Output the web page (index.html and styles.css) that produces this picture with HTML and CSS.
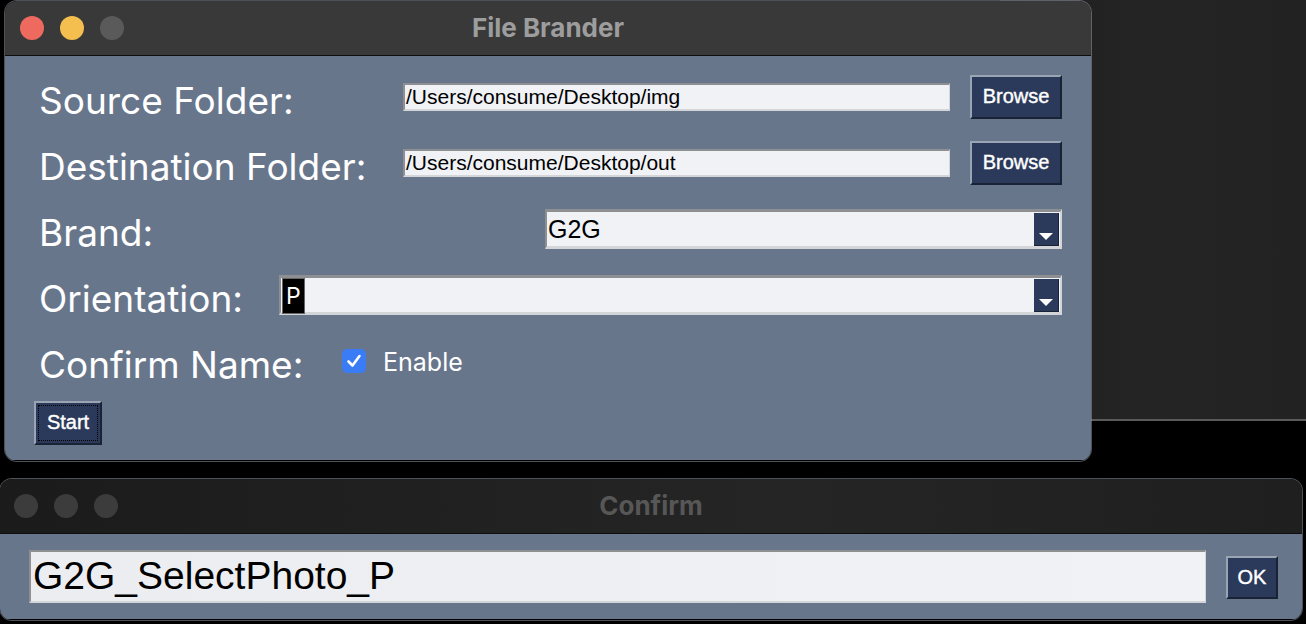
FILE: index.html
```html
<!DOCTYPE html>
<html>
<head>
<meta charset="utf-8">
<link rel="stylesheet" href="styles.css">
</head>
<body>
<div class="desktop">
  <div class="bg-window"></div>

  <div class="window main">
    <div class="titlebar active">
      <div class="lights">
        <span class="light red"></span>
        <span class="light yellow"></span>
        <span class="light gray"></span>
      </div>
      <div class="title">File Brander</div>
    </div>
    <div class="content">
      <div class="row">
        <div class="label">Source Folder:</div>
        <div class="entry path-entry">/Users/consume/Desktop/img</div>
        <div class="btn browse">Browse</div>
      </div>
      <div class="row">
        <div class="label">Destination Folder:</div>
        <div class="entry path-entry">/Users/consume/Desktop/out</div>
        <div class="btn browse">Browse</div>
      </div>
      <div class="row">
        <div class="label">Brand:</div>
        <div class="combo brand-combo">
          <div class="combo-text">G2G</div>
          <div class="combo-arrow"><span class="tri"></span></div>
        </div>
      </div>
      <div class="row">
        <div class="label">Orientation:</div>
        <div class="combo orient-combo">
          <div class="combo-text"><span class="sel">P</span></div>
          <div class="combo-arrow"><span class="tri"></span></div>
        </div>
      </div>
      <div class="row">
        <div class="label">Confirm Name:</div>
        <div class="check">
          <svg width="24" height="24" viewBox="0 0 24 24"><rect x="0" y="0" width="24" height="24" rx="5" fill="#3a7cf5"/><path d="M6.5 12.5 L10.5 16.5 L17.5 7" stroke="#fff" stroke-width="2.6" fill="none" stroke-linecap="round" stroke-linejoin="round"/></svg>
          <span class="check-label">Enable</span>
        </div>
      </div>
      <div class="btn start"><span class="focus">Start</span></div>
    </div>
  </div>

  <div class="window confirm">
    <div class="titlebar inactive">
      <div class="lights">
        <span class="light dim"></span>
        <span class="light dim"></span>
        <span class="light dim"></span>
      </div>
      <div class="title">Confirm</div>
    </div>
    <div class="confirm-content">
      <div class="entry big-entry">G2G_SelectPhoto_P</div>
      <div class="btn ok">OK</div>
    </div>
  </div>
</div>
</body>
</html>
```

FILE: styles.css
```css
* { box-sizing: border-box; }
html, body { margin: 0; padding: 0; }
body {
  background: #000;
  width: 1306px;
  height: 624px;
  overflow: hidden;
  font-family: "Liberation Sans", Arial, sans-serif;
}
.desktop { position: relative; width: 1306px; height: 624px; }

.bg-window {
  position: absolute;
  left: 1000px;
  top: -20px;
  width: 330px;
  height: 441px;
  background: linear-gradient(90deg, #1d1d1d 0%, #242424 40%, #222 100%);
  border-bottom: 2px solid #5a5a5a;
  border-radius: 0 0 12px 12px;
}

.window {
  position: absolute;
  overflow: hidden;
  border-radius: 12px;
  box-shadow: 0 0 0 1px rgba(170,180,195,0.45);
}
.main { left: 5px; top: 1px; width: 1086px; height: 460px; }
.confirm { left: 0px; top: 479px; width: 1302px; height: 141px; }

.titlebar {
  position: relative;
  height: 55px;
  border-bottom: 1px solid #0e0e0e;
  display: flex;
  align-items: center;
  justify-content: center;
}
.titlebar.active { background: #393939; }
.titlebar.inactive { background: linear-gradient(90deg, #1b1b1b, #252525 60%, #1f1f1f); }

.lights {
  position: absolute;
  left: 15px;
  top: 15px;
  display: flex;
  gap: 16px;
}
.light { width: 24px; height: 24px; border-radius: 50%; display: block; }
.red { background: #ee6a5e; }
.yellow { background: #f5bf4f; }
.gray { background: #5a5a5a; }
.dim { background: #3c3c3c; }
.confirm .lights { left: 14px; top: 15px; }

.title {
  font-family: Inter, "Liberation Sans", sans-serif;
  font-weight: 700;
  font-size: 26px;
  color: #9d9d9d;
  margin-top: -2px;
}
.inactive .title { color: #575757; }

.content {
  background: #68768c;
  height: 404px;
  padding: 8px 29px 0 34px;
}
.row {
  height: 66px;
  display: flex;
  align-items: center;
  position: relative;
}
.label {
  font-family: Inter, "Liberation Sans", sans-serif;
  font-size: 37px;
  color: #fff;
  padding-top: 6px;
  white-space: nowrap;
  width: 0;
  overflow: visible;
}

.entry {
  background: #f0f2f6;
  border-style: solid;
  border-width: 2px 1px 2px 2px;
  border-color: #8d8f93 #d3d5d9 #d3d5d9 #8d8f93;
  color: #000;
  white-space: nowrap;
}
.path-entry {
  margin-left: 364px;
  width: 547px;
  height: 28px;
  font-size: 21px;
  line-height: 24px;
  padding-left: 1px;
}

.btn {
  background: #2b3a5a;
  color: #fff;
  border-style: solid;
  border-width: 2px;
  border-color: #9ba4b4 #1a2336 #1a2336 #9ba4b4;
  display: flex;
  align-items: center;
  justify-content: center;
  font-size: 20px;
  -webkit-text-stroke: 0.4px #fff;
}
.browse {
  margin-left: 20px;
  width: 92px;
  height: 44px;
  padding-bottom: 2px;
}

.combo {
  height: 40px;
  display: flex;
  background: #f0f2f6;
  border-style: solid;
  border-width: 3px 2px 3px 2px;
  border-color: #8d8f93 #d3d5d9 #d3d5d9 #8d8f93;
}
.brand-combo { margin-left: 506px; width: 517px; }
.orient-combo { margin-left: 240px; width: 783px; }
.combo-text {
  flex: 1;
  font-size: 25px;
  line-height: 34px;
  padding-left: 1px;
  color: #000;
}
.combo-arrow {
  width: 25px;
  margin: 1px 1px 0 0;
  background: #2b3a5a;
  border-right: 1px solid #1a2336;
  border-bottom: 1px solid #1a2336;
  position: relative;
}
.tri {
  position: absolute;
  left: 5px;
  bottom: 5px;
  width: 0; height: 0;
  border-left: 7px solid transparent;
  border-right: 7px solid transparent;
  border-top: 7px solid #fff;
}
.sel {
  display: inline-block;
  background: #000;
  color: #fff;
  font-family: Inter, "Liberation Sans", sans-serif;
  font-size: 23px;
  line-height: 34px;
  padding: 0 3px;
  border: 1px solid #666;
}

.check {
  margin-left: 303px;
  display: flex;
  align-items: center;
}
.check svg { display: block; }
.check-label {
  margin-left: 17px;
  font-family: Inter, "Liberation Sans", sans-serif;
  font-size: 25px;
  color: #fff;
  padding-top: 2px;
}

.start {
  margin-top: 7px;
  margin-left: -5px;
  width: 68px;
  height: 44px;
  padding: 2px;
}
.start .focus {
  width: 100%;
  height: 100%;
  border: 1px dotted #000;
  display: flex;
  align-items: center;
  justify-content: center;
  font-size: 20px;
  padding-bottom: 2px;
}

.confirm-content {
  background: #68768c;
  height: 85px;
  display: flex;
  align-items: center;
  padding: 0 0 0 29px;
}
.big-entry {
  width: 1177px;
  height: 53px;
  font-size: 39px;
  line-height: 48px;
  padding-left: 2px;
  background: linear-gradient(90deg, #ecedf0, #f1f2f6);
}
.ok {
  margin-left: 20px;
  width: 52px;
  height: 43px;
  font-size: 20px;
  margin-top: 2px;
}
```
